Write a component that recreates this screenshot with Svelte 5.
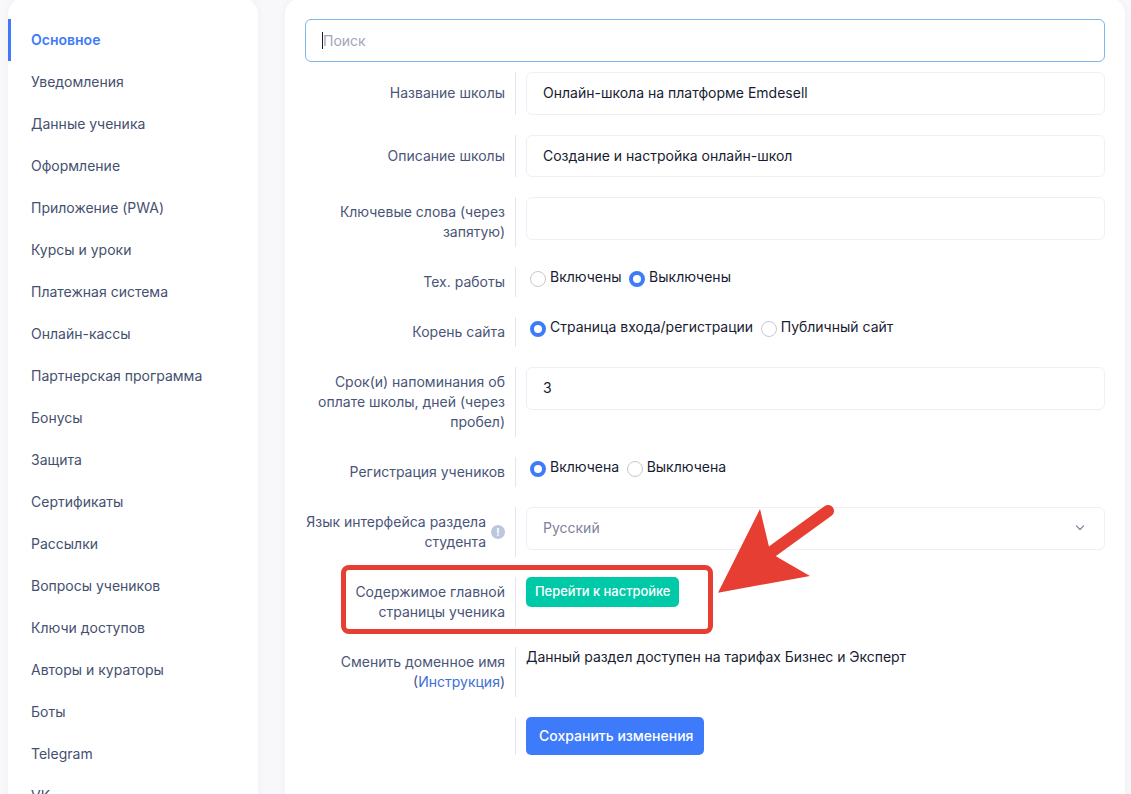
<script lang="ts">
	const menu = [
		'Основное', 'Уведомления', 'Данные ученика', 'Оформление', 'Приложение (PWA)',
		'Курсы и уроки', 'Платежная система', 'Онлайн-кассы', 'Партнерская программа',
		'Бонусы', 'Защита', 'Сертификаты', 'Рассылки', 'Вопросы учеников',
		'Ключи доступов', 'Авторы и кураторы', 'Боты', 'Telegram', 'VK'
	];
</script>

{#snippet radio(label: string, on: boolean)}
	<span class="radio-item">
		<span class="radio" class:on></span>
		<span>{label}</span>
	</span>
{/snippet}

<div class="page">
	<div class="layout">
		<aside class="card sidebar">
			<ul>
				{#each menu as item, i}
					<li class:active={i === 0}>{item}</li>
				{/each}
			</ul>
		</aside>

		<main class="card content">
			<div class="search">
				<span class="caret"></span>
				<span>Поиск</span>
			</div>

			<div class="row">
				<div class="label"><span>Название школы</span></div>
				<div class="field"><div class="input">Онлайн-школа на платформе Emdesell</div></div>
			</div>
			<div class="row">
				<div class="label"><span>Описание школы</span></div>
				<div class="field"><div class="input">Создание и настройка онлайн-школ</div></div>
			</div>
			<div class="row">
				<div class="label"><span>Ключевые слова (через запятую)</span></div>
				<div class="field"><div class="input"></div></div>
			</div>
			<div class="row">
				<div class="label"><span>Тех. работы</span></div>
				<div class="field radios">
					{@render radio('Включены', false)}
					{@render radio('Выключены', true)}
				</div>
			</div>
			<div class="row">
				<div class="label"><span>Корень сайта</span></div>
				<div class="field radios">
					{@render radio('Страница входа/регистрации', true)}
					{@render radio('Публичный сайт', false)}
				</div>
			</div>
			<div class="row">
				<div class="label"><span>Срок(и) напоминания об оплате школы, дней (через пробел)</span></div>
				<div class="field"><div class="input">3</div></div>
			</div>
			<div class="row">
				<div class="label"><span>Регистрация учеников</span></div>
				<div class="field radios">
					{@render radio('Включена', true)}
					{@render radio('Выключена', false)}
				</div>
			</div>
			<div class="row">
				<div class="label with-hint">
					<span>Язык интерфейса раздела студента</span>
					<span class="hint">!</span>
				</div>
				<div class="field">
					<div class="input select">
						<span>Русский</span>
						<svg width="10" height="6" viewBox="0 0 10 6" fill="none" stroke="#7f8fa8" stroke-width="1.2" stroke-linecap="round" stroke-linejoin="round"><path d="M1.5 1l3.5 3.5L8.500 1" /></svg>
					</div>
				</div>
			</div>
			<div class="row">
				<div class="label"><span>Содержимое главной страницы ученика</span></div>
				<div class="field"><span class="btn-green">Перейти к настройке</span></div>
			</div>
			<div class="row">
				<div class="label"><span>Сменить доменное имя<br />(<span class="link">Инструкция</span>)</span></div>
				<div class="field note">Данный раздел доступен на тарифах Бизнес и Эксперт</div>
			</div>
			<div class="row last">
				<div class="label"></div>
				<div class="field"><span class="btn-save">Сохранить изменения</span></div>
			</div>
		</main>
	</div>

	<div class="mark"></div>
	<svg class="arrow" width="130" height="100" viewBox="0 0 130 100">
		<path d="M8 92.700L50 9l9 37.700 7.700 10L100 76z" fill="#e63e32" />
		<path d="M60 53L118 11" stroke="#e63e32" stroke-width="12" stroke-linecap="round" fill="none" />
	</svg>
</div>

<style>
	:global(body) {
		margin: 0;
		background: #f8f8fa;
		font-family: Inter, 'Liberation Sans', sans-serif;
	}

	.page {
		position: relative;
		width: 1131px;
		height: 794px;
		overflow: hidden;
		font-size: 14px;
		line-height: 20px;
		color: #181c32;
	}

	.layout {
		display: flex;
		gap: 27px;
		padding-left: 8px;
		margin-top: -2px;
	}

	.card {
		background: #fff;
		border-radius: 16px;
		box-shadow: 0 0 6px rgba(82, 63, 105, 0.06);
	}

	.sidebar {
		width: 250px;
		flex-shrink: 0;
		padding-top: 21px;
	}

	.sidebar ul {
		list-style: none;
		margin: 0;
		padding: 0;
	}

	.sidebar li {
		height: 42px;
		line-height: 42px;
		padding-left: 23px;
		color: #45506f;
	}

	.sidebar li.active {
		color: #3e7bfa;
		font-weight: 600;
		box-shadow: inset 3px 0 0 #3e7bfa;
	}

	.content {
		width: 800px;
		flex-shrink: 0;
		padding: 21px 20px 40px;
	}

	.search {
		display: flex;
		align-items: center;
		height: 41px;
		border: 1px solid #7ab8ee;
		border-radius: 6px;
		padding-left: 16px;
		color: #a1a5b7;
		margin-bottom: 10px;
	}

	.caret {
		width: 1px;
		height: 17px;
		background: #181c32;
	}

	.row {
		display: flex;
		margin-bottom: 20px;
	}

	.label {
		width: 210px;
		flex-shrink: 0;
		box-sizing: border-box;
		padding: 5px 10px 5px 0;
		text-align: right;
		color: #4a5578;
		display: flex;
		align-items: center;
		justify-content: flex-end;
	}

	.field {
		flex: 1;
		border-left: 1px solid #e4e6ef;
		padding-left: 10px;
	}

	.note {
		letter-spacing: -0.03px;
	}

	.input {
		box-sizing: border-box;
		height: 42.6px;
		border: 1px solid #eff0f6;
		border-radius: 6px;
		padding: 0 16px;
		display: flex;
		align-items: center;
	}

	.select {
		justify-content: space-between;
		color: #7e8299;
		padding-right: 19px;
	}

	.radios {
		display: flex;
		gap: 7.5px;
		padding-left: 14px;
	}

	.radio-item {
		display: flex;
		gap: 4px;
		height: 20px;
	}

	.radio {
		box-sizing: border-box;
		width: 16px;
		height: 16px;
		margin-top: 4px;
		border-radius: 50%;
		border: 1px solid #c8c9d0;
		background: #fff;
	}

	.radio.on {
		border: 4px solid #3e7bfa;
	}

	.with-hint {
		gap: 5px;
	}

	.hint {
		flex-shrink: 0;
		width: 14px;
		height: 14px;
		border-radius: 50%;
		background: #bcc7de;
		color: #fff;
		font-size: 10px;
		font-weight: 700;
		line-height: 14px;
		text-align: center;
	}

	.btn-green {
		display: inline-block;
		padding: 5px 9px;
		background: #00c9a7;
		border-radius: 5px;
		color: #fff;
		font-size: 12.9px;
		font-weight: 500;
	}

	.btn-save {
		display: inline-block;
		padding: 9px 11px 9px 13px;
		background: #3e7bfa;
		border-radius: 5px;
		color: #fff;
		font-weight: 500;
		vertical-align: top;
	}

	.link {
		color: #3e6ed8;
	}

	.mark {
		position: absolute;
		left: 341px;
		top: 565px;
		width: 372px;
		height: 69px;
		box-sizing: border-box;
		border: 5px solid #e63e32;
		border-radius: 8px;
	}

	.arrow {
		position: absolute;
		left: 710px;
		top: 500px;
	}
</style>
